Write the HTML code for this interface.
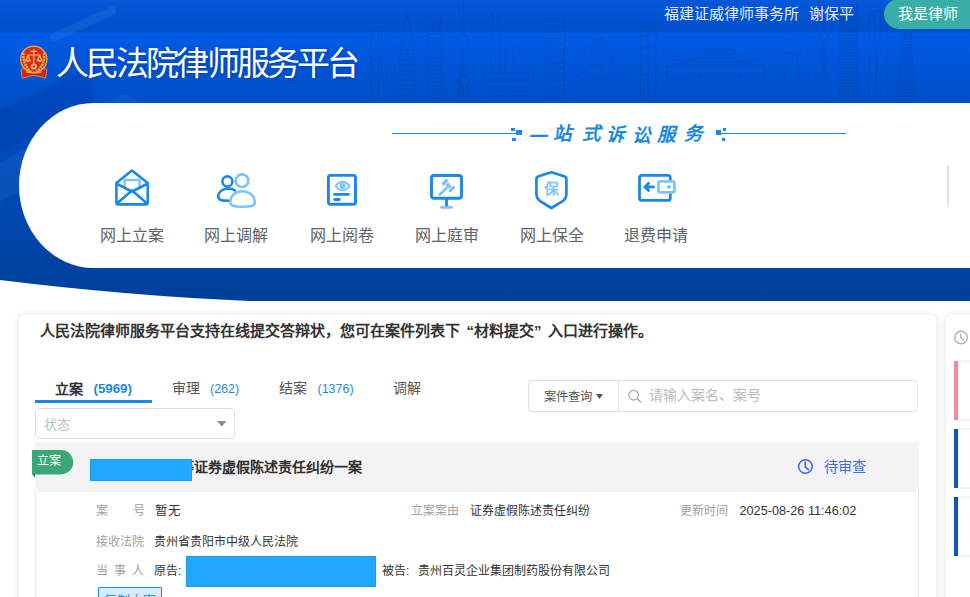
<!DOCTYPE html>
<html lang="zh-CN"><head><meta charset="utf-8">
<style>
*{margin:0;padding:0;box-sizing:border-box}
html,body{width:970px;height:597px;overflow:hidden;background:#fff}
body{position:relative;font-family:"Liberation Sans",sans-serif;color:#333}
.a{position:absolute;white-space:nowrap;line-height:1}
svg.ov{position:absolute;left:0;top:0}
#panel{position:absolute;left:19px;top:103px;width:980px;height:165px;background:#fff;border-radius:75px 0 0 75px / 83px 0 0 83px}
.nt{position:absolute;width:70px;text-align:center;top:227.5px;font-size:16px;color:#606266;line-height:1}
.card{position:absolute;background:#fff;border-radius:5px;box-shadow:0 0 7px rgba(0,0,0,0.13)}
.lbl{color:#a0a0a0}
.sl{font-size:18.5px;font-weight:bold;font-style:italic;color:#1a88e6;}
.q{display:inline-block;width:14px;text-align:right}
.q2{display:inline-block;width:14px;text-align:left}
</style></head><body>
<svg class="ov" width="970" height="310" viewBox="0 0 970 310">
<defs>
<linearGradient id="g1" x1="0" y1="0" x2="0" y2="301" gradientUnits="userSpaceOnUse">
<stop offset="0" stop-color="#005de8"/>
<stop offset="0.11" stop-color="#005be6"/>
<stop offset="0.33" stop-color="#004fc8"/>
<stop offset="0.65" stop-color="#0049b4"/>
<stop offset="1" stop-color="#00409a"/>
</linearGradient>
<linearGradient id="gb" x1="0" y1="0" x2="0" y2="33" gradientUnits="userSpaceOnUse">
<stop offset="0" stop-color="#0457d8"/>
<stop offset="1" stop-color="#004fcb"/>
</linearGradient>
</defs>
<path d="M0,0H970V301H250Q130,296 0,280Z" fill="url(#g1)"/>
<rect x="0" y="0" width="970" height="32.5" fill="url(#gb)"/>
<g fill="none" stroke="#002070" stroke-opacity="0.22" stroke-width="0.8"><path d="M371,103 V31 H386 V103 M371,40 H386 M371,60 H386 M371,85 H386 M378.5,31 V103"/><path d="M399,103 L400,45 L403,30 L405,22 L407,15 V8.6 M407,15 L409,22 L411,30 L414,45 L415,103"/><path d="M403,35 H411"/><path d="M403,40 H411"/><path d="M403,45 H411"/><path d="M400,50 H414"/><path d="M400,55 H414"/><path d="M400,60 H414"/><path d="M400,65 H414"/><path d="M400,70 H414"/><path d="M400,75 H414"/><path d="M400,80 H414"/><path d="M400,85 H414"/><path d="M400,90 H414"/><path d="M400,95 H414"/><path d="M400,100 H414"/><path d="M427.5,103 V16 L441,20 V103 Z M433,22 H439 V30 Q436,26 433,30 Z"/><path d="M428,30 H440.5"/><path d="M428,34 H440.5"/><path d="M428,38 H440.5"/><path d="M428,42 H440.5"/><path d="M428,46 H440.5"/><path d="M428,50 H440.5"/><path d="M428,54 H440.5"/><path d="M428,58 H440.5"/><path d="M428,62 H440.5"/><path d="M428,66 H440.5"/><path d="M428,70 H440.5"/><path d="M428,74 H440.5"/><path d="M428,78 H440.5"/><path d="M428,82 H440.5"/><path d="M428,86 H440.5"/><path d="M428,90 H440.5"/><path d="M428,94 H440.5"/><path d="M428,98 H440.5"/><path d="M428,102 H440.5"/><path d="M463.3,0 V35 M463.3,47 V76 M463.3,88 V103 M460,103 L461,60 M466.5,103 L465.5,60 M455,103 L460,86 M471.5,103 L466.5,86"/><circle cx="463.3" cy="41.5" r="6"/><circle cx="463.3" cy="82" r="6"/><circle cx="463.3" cy="26" r="2"/><path d="M491,72 V30 L493,14 V30 L495,33 L497,28 L498,15 L500,28 V72 M505,72 V48 L510,44 L513,48 V72"/><path d="M482.6,73 H535 L528,90 H490 Z M486,80 H531"/><path d="M545.5,103 V21 H564.5 V103"/><path d="M545.5,26 H564.5"/><path d="M545.5,32 H564.5"/><path d="M545.5,38 H564.5"/><path d="M545.5,44 H564.5"/><path d="M545.5,50 H564.5"/><path d="M545.5,56 H564.5"/><path d="M545.5,62 H564.5"/><path d="M545.5,68 H564.5"/><path d="M545.5,74 H564.5"/><path d="M545.5,80 H564.5"/><path d="M545.5,86 H564.5"/><path d="M545.5,92 H564.5"/><path d="M545.5,98 H564.5"/><path d="M575.6,77.7 H629.2 L612,66 H591 Z M601.5,77.7 V66 M590,66 V58 H613 V66 M586,58 L601.5,50 L617,58 M589,50 L601.5,44 L614,50 M592,50 V45 M611,50 V45 M594,44 L601.5,39 L609,44 M601.5,39 V36"/><path d="M640.5,103 V31 Q648,27 655.8,31 V103 M640.5,36 H655.8 M640.5,48 H655.8 M640.5,75 H655.8 M648,29 V103"/><path d="M667,77.7 H764.5 V66 H667 Z M683,66 V62 H748 V66 M690,62 L694,58 H737 L741,62 M697,58 V54 H734 V58 M694,54 L698,49 H733 L737,54 M700,77.7 V73 M710,77.7 V73 M720,77.7 V73 M730,77.7 V73 M740,77.7 V73 M668,60 H690 M741,60 H763"/><path d="M775,77.7 L784,40 L796,37 L806,44 L810,77.7 H798 L797,55 L786,52 L785,77.7 Z"/><path d="M823.8,17 V33 M823.8,41 V77 M822,77 L822.5,41 M825.6,77 L825.1,41"/><ellipse cx="823.8" cy="37" rx="4.5" ry="3"/><path d="M839.5,103 V5 H857.5 V103"/><path d="M840,8 H857"/><path d="M840,11 H857"/><path d="M840,14 H857"/><path d="M840,17 H857"/><path d="M840,20 H857"/><path d="M840,23 H857"/><path d="M840,26 H857"/><path d="M840,29 H857"/><path d="M840,32 H857"/><path d="M840,35 H857"/><path d="M840,38 H857"/><path d="M840,41 H857"/><path d="M840,44 H857"/><path d="M840,47 H857"/><path d="M840,50 H857"/><path d="M840,53 H857"/><path d="M840,56 H857"/><path d="M840,59 H857"/><path d="M840,62 H857"/><path d="M840,65 H857"/><path d="M840,68 H857"/><path d="M840,71 H857"/><path d="M840,74 H857"/><path d="M840,77 H857"/><path d="M840,80 H857"/><path d="M840,83 H857"/><path d="M840,86 H857"/><path d="M840,89 H857"/><path d="M840,92 H857"/><path d="M840,95 H857"/><path d="M840,98 H857"/><path d="M840,101 H857"/><path d="M869,103 V13 Q878,9 887,13 V103 M873,103 L882,13 M878,103 L874,13"/><path d="M898,103 L902,30 L910,25 L915.4,103"/><path d="M901.5,33 H911.5"/><path d="M901.4,36 H911.6"/><path d="M901.2,39 H911.8"/><path d="M901.0,42 H912.0"/><path d="M900.9,45 H912.1"/><path d="M900.8,48 H912.2"/><path d="M900.6,51 H912.4"/><path d="M900.5,54 H912.5"/><path d="M900.3,57 H912.7"/><path d="M900.1,60 H912.9"/><path d="M900.0,63 H913.0"/><path d="M899.9,66 H913.1"/><path d="M899.7,69 H913.3"/><path d="M899.5,72 H913.5"/><path d="M899.4,75 H913.6"/><path d="M899.2,78 H913.8"/><path d="M899.1,81 H913.9"/><path d="M899.0,84 H914.0"/><path d="M898.8,87 H914.2"/><path d="M898.6,90 H914.4"/><path d="M898.5,93 H914.5"/><path d="M898.4,96 H914.6"/><path d="M898.2,99 H914.8"/><path d="M898.0,102 H915.0"/></g>
<line x1="-40" y1="150" x2="75" y2="95" stroke="#001a70" stroke-opacity="0.13" stroke-width="38" stroke-linecap="round"/>
<line x1="-40" y1="205" x2="125" y2="112" stroke="#ffffff" stroke-opacity="0.045" stroke-width="34" stroke-linecap="round"/>
<line x1="55" y1="37" x2="112" y2="11" stroke="#fff" stroke-opacity="0.06" stroke-width="9" stroke-linecap="round"/>
</svg>
<div id="panel"></div>

<!-- header texts -->
<div class="a" id="title" style="left:55.5px;top:47px;font-size:33px;letter-spacing:-2.8px;color:#fff;text-shadow:0 1px 4px rgba(0,25,100,0.35)">人民法院律师服务平台</div>
<div class="a" id="org" style="left:664px;top:6px;font-size:15px;color:#e3ebff">福建证威律师事务所</div>
<div class="a" id="uname" style="left:809px;top:6px;font-size:15px;color:#e3ebff">谢保平</div>
<div style="position:absolute;left:884px;top:-1px;width:110px;height:30px;border-radius:15px;background:#39aea6"></div>
<div class="a" id="btnt" style="left:898px;top:6px;font-size:15px;color:#fff">我是律师</div>

<!-- emblem -->
<svg class="ov" width="970" height="100" viewBox="0 0 970 100">
<path d="M21,69.5 L25.5,67.5 L42,67.5 L46.8,69.5 L45.5,78.3 L39,76.2 Q34,74.8 29,76.2 L22.2,78.3 Z" fill="#d01f1a" stroke="#e2a23a" stroke-width="0.8"/>
<circle cx="33.8" cy="59.2" r="13.1" fill="#dc2a1f" stroke="#e9b04a" stroke-width="1.3"/>
<path d="M23.5,53 Q22.5,65 31,71.5 M44.1,53 Q45.1,65 36.6,71.5" stroke="#eab54c" stroke-width="2.4" fill="none" stroke-dasharray="2 0.8"/>
<path d="M33.8,49.5 V64 M30.5,51.3 H37.1 M27.8,55 H39.8 M28,55 L26,60.5 M28,55 L30,60.5 M39.6,55 L37.6,60.5 M39.6,55 L41.6,60.5" stroke="#f2c558" stroke-width="1.2" fill="none"/>
<path d="M25.2,60.3 Q28,63 30.8,60.3 Z M36.8,60.3 Q39.6,63 42.4,60.3 Z" fill="#f2c558" stroke="#f2c558" stroke-width="0.8"/>
<circle cx="33.8" cy="66.5" r="3" fill="#f2c558"/>
<circle cx="33.8" cy="66.5" r="1.2" fill="#d02a1f"/>
<path d="M26,71.8 Q33.8,74 41.6,71.8" stroke="#eab54c" stroke-width="1.4" fill="none"/>
</svg>
<!-- service title decoration -->
<svg class="ov" width="970" height="300" viewBox="0 0 970 300">
<g fill="#1a88e6">
<rect x="392" y="133" width="124" height="1"/>
<rect x="516" y="130" width="6" height="5"/>
<rect x="511" y="128" width="4" height="3"/>
<rect x="512" y="138" width="4" height="3"/>
<rect x="721" y="133" width="125" height="1"/>
<rect x="716" y="130" width="5" height="5"/>
<rect x="723" y="128" width="3" height="3"/>
<rect x="722" y="138" width="3" height="3"/>
<rect x="947" y="165" width="2" height="42" fill="#e2e2f0"/>
</g>
</svg>
<div class="a sl" id="sl0" style="left:528px;top:128px">一</div><div class="a sl" id="sl1" style="left:553px;top:125px">站</div><div class="a sl" id="sl2" style="left:582px;top:125px">式</div><div class="a sl" id="sl3" style="left:606px;top:126px">诉</div><div class="a sl" id="sl4" style="left:632px;top:127px">讼</div><div class="a sl" id="sl5" style="left:657px;top:126px">服</div><div class="a sl" id="sl6" style="left:684px;top:125px">务</div>

<!-- nav icons -->
<svg class="ov" width="970" height="300" viewBox="0 0 970 300" fill="none" stroke-linecap="round" stroke-linejoin="round">
<!-- envelope -->
<path d="M124.7,187 V180 H139.6 V187" stroke="#7cc4f8" stroke-width="2.5"/>
<path d="M116.4,183 L131.9,170.5 L147.7,183 V202.5 Q147.7,204.4 145.8,204.4 H118.3 Q116.4,204.4 116.4,202.5 Z" stroke="#1a88e6" stroke-width="2.6"/>
<path d="M117,184 L132,191.5 L147,184 M117.5,203 L132,190.5 L146.5,203" stroke="#1a88e6" stroke-width="2.6"/>
<!-- people -->
<circle cx="227.4" cy="181.4" r="5" stroke="#1a88e6" stroke-width="2.6"/>
<path d="M235,190.3 C231,187.8 222,187.8 219,193.3 C217,197.5 219,200.4 223,200.6 L229,200.8" stroke="#1a88e6" stroke-width="2.6"/>
<circle cx="242" cy="180.7" r="6.3" stroke="#7cc4f8" stroke-width="2.6"/>
<path d="M230.3,202.8 C230.3,195.5 235.5,191.3 242.5,191.3 C249.5,191.3 254.8,195.5 254.8,202.8 C254.8,206.3 250,206.8 242.5,206.8 C235,206.8 230.3,206.3 230.3,202.8 Z" stroke="#7cc4f8" stroke-width="2.6" fill="#fff"/>
<!-- doc eye -->
<rect x="328.4" y="175.4" width="27.1" height="28.9" rx="2" stroke="#1a88e6" stroke-width="2.9"/>
<path d="M335.6,186.1 Q342.6,177.6 349.6,186.1 Q342.6,194.6 335.6,186.1 Z" stroke="#7cc4f8" stroke-width="2" fill="#fff"/>
<circle cx="342.6" cy="186.1" r="3" fill="#7cc4f8"/>
<path d="M334.6,194.4 H348.4 M334.6,199.5 H339.3" stroke="#1a88e6" stroke-width="2.8"/>
<!-- monitor gavel -->
<rect x="431.5" y="175.5" width="30" height="22.7" rx="2.5" stroke="#1a88e6" stroke-width="2.9"/>
<path d="M446.5,199.6 V205.5" stroke="#1a88e6" stroke-width="2.8"/>
<path d="M441.6,207.3 H451.6" stroke="#7cc4f8" stroke-width="2.8"/>
<g transform="rotate(45 448.4 185.6)" fill="#7cc4f8" stroke="none">
<rect x="443.6" y="183.6" width="9.6" height="4"/>
<rect x="441.8" y="181.9" width="3.4" height="7.4" rx="1"/>
<rect x="451.6" y="181.9" width="3.4" height="7.4" rx="1"/>
<rect x="445.2" y="181.9" width="0.6" height="7.4" fill="#fff"/>
<rect x="451" y="181.9" width="0.6" height="7.4" fill="#fff"/>
</g>
<path d="M446.4,188.3 L439.8,194.6" stroke="#7cc4f8" stroke-width="2.7"/>
<!-- shield -->
<path d="M551.4,172.3 L538.6,176.3 Q536.4,177 536.4,179.4 V194 Q536.4,198.5 540.5,201.3 L551.4,208 L562.3,201.3 Q566.4,198.5 566.4,194 V179.4 Q566.4,177 564.2,176.3 Z" stroke="#1a88e6" stroke-width="2.7"/>
<!-- wallet -->
<rect x="639.5" y="175.3" width="30.8" height="25.1" rx="2.5" stroke="#1a88e6" stroke-width="2.8"/>
<rect x="658.4" y="181.4" width="16" height="10.9" rx="2" stroke="#7cc4f8" stroke-width="2.8" fill="#fff"/>
<circle cx="669" cy="186.9" r="1.9" fill="#7cc4f8" stroke="none"/>
<path d="M645.5,186.9 H653.5 M648.6,183.2 L644.9,186.9 L648.6,190.6" stroke="#1a88e6" stroke-width="2.8"/>
</svg>
<div class="a" id="bao" style="left:543.5px;top:181px;font-size:15px;color:#7cc4f8;-webkit-text-stroke:0.5px #7cc4f8">保</div>

<div class="nt" style="left:96.5px">网上立案</div>
<div class="nt" style="left:201px">网上调解</div>
<div class="nt" style="left:306.5px">网上阅卷</div>
<div class="nt" style="left:411.5px">网上庭审</div>
<div class="nt" style="left:517px">网上保全</div>
<div class="nt" style="left:621px">退费申请</div>

<!-- lower content -->
<div class="card" style="left:19px;top:315px;width:917px;height:300px"></div>
<div class="card" style="left:946px;top:315px;width:60px;height:300px"></div>


<div class="a" id="notice" style="left:40px;top:323px;font-size:15px;font-weight:bold;color:#333">人民法院律师服务平台支持在线提交答辩状，您可在案件列表下<span class="q">“</span>材料提交<span class="q2">”</span>入口进行操作。</div>

<!-- tabs -->
<div class="a" id="t1" style="left:55px;top:381.5px;font-size:14px;font-weight:bold;color:#303133">立案</div>
<div class="a" id="t1n" style="left:93.5px;top:382px;font-size:13.3px;font-weight:bold;color:#1a88e6">(5969)</div>
<div style="position:absolute;left:35px;top:400px;width:117px;height:3px;background:#1a88e6"></div>
<div class="a" id="t2" style="left:172px;top:381px;font-size:14px;color:#555">审理</div>
<div class="a" id="t2n" style="left:210px;top:383px;font-size:12.5px;color:#1a88e6">(262)</div>
<div class="a" id="t3" style="left:279px;top:381px;font-size:14px;color:#555">结案</div>
<div class="a" id="t3n" style="left:317.5px;top:383px;font-size:12.5px;color:#1a88e6">(1376)</div>
<div class="a" id="t4" style="left:393px;top:381px;font-size:14px;color:#555">调解</div>

<!-- select -->
<div style="position:absolute;left:35px;top:408px;width:200px;height:31px;border:1px solid #dcdfe6;border-radius:4px"></div>
<div class="a" style="left:44px;top:418px;font-size:13px;color:#bcbfc6">状态</div>
<svg class="ov" width="970" height="597" viewBox="0 0 970 597"><path d="M217,421 H226.5 L221.75,426.5 Z" fill="#8a8d93"/></svg>

<!-- search -->
<div style="position:absolute;left:528px;top:380px;width:390px;height:32px;border:1px solid #dcdfe6;border-radius:4px"></div>
<div style="position:absolute;left:618px;top:381px;width:1px;height:30px;background:#dcdfe6"></div>
<div class="a" id="sq" style="left:543.5px;top:390.5px;font-size:12.3px;color:#555">案件查询</div>
<svg class="ov" width="970" height="597" viewBox="0 0 970 597">
<path d="M596,394 H603 L599.5,399 Z" fill="#555"/>
<circle cx="633.6" cy="395.2" r="4.8" stroke="#a8abb2" stroke-width="1.3" fill="none"/>
<path d="M637.2,398.8 L640.6,402.2" stroke="#a8abb2" stroke-width="1.4" stroke-linecap="round"/>
</svg>
<div class="a" id="ph" style="left:649px;top:388px;font-size:14px;color:#b8bbc1">请输入案名、案号</div>

<!-- list item -->
<div style="position:absolute;left:35px;top:442px;width:884px;height:200px;border:1px solid #e8e8e8;border-top:none"></div>
<div style="position:absolute;left:35px;top:442px;width:884px;height:50px;background:#f3f3f3"></div>
<svg class="ov" width="970" height="597" viewBox="0 0 970 597">
<path d="M32,474 L35,474 L35,477.5 Z" fill="#24805a"/>
<path d="M32,450 H61 A12.2,12.2 0 0 1 61,474.4 H32 Z" fill="#3aa876"/>
</svg>
<div class="a" style="left:37px;top:455px;font-size:12px;color:#fff">立案</div>
<div class="a" style="left:180px;top:460px;font-size:14px;font-weight:bold;color:#303133">等</div>
<div style="position:absolute;left:90px;top:459px;width:102px;height:22px;background:#22a9ff;border:1px solid #1b9af2"></div>
<div class="a" id="ctitle" style="left:194px;top:460px;font-size:14px;font-weight:bold;color:#303133">证券虚假陈述责任纠纷一案</div>
<svg class="ov" width="970" height="597" viewBox="0 0 970 597">
<circle cx="805.4" cy="466.5" r="6.8" stroke="#3c6fe6" stroke-width="1.6" fill="none"/>
<path d="M805.2,462 V467 L808.6,469.6" stroke="#3c6fe6" stroke-width="1.6" fill="none" stroke-linecap="round"/>
</svg>
<div class="a" id="st" style="left:823.5px;top:459.5px;font-size:14.3px;color:#3c6fe6">待审查</div>

<div class="a lbl" style="left:96px;top:505px;font-size:12px">案<span style="display:inline-block;width:25px"></span>号</div>
<div class="a" style="left:154.5px;top:505px;font-size:12.5px;color:#333">暂无</div>
<div class="a lbl" style="left:411px;top:505px;font-size:12px">立案案由</div>
<div class="a" style="left:470px;top:505px;font-size:12px;color:#333">证券虚假陈述责任纠纷</div>
<div class="a lbl" style="left:680px;top:505px;font-size:12px">更新时间</div>
<div class="a" id="time" style="left:739.5px;top:505px;font-size:12.7px;color:#333">2025-08-26 11:46:02</div>
<div class="a lbl" style="left:96px;top:535.5px;font-size:12px">接收法院</div>
<div class="a" style="left:154px;top:535.5px;font-size:12px;color:#333">贵州省贵阳市中级人民法院</div>
<div class="a lbl" style="left:96px;top:565px;font-size:12px;letter-spacing:6px">当事人</div>
<div class="a" style="left:154px;top:565px;font-size:12px;color:#333">原告:</div>
<div style="position:absolute;left:186px;top:556px;width:190px;height:31px;background:#22a9ff;border:1px solid #1b9af2"></div>
<div class="a" style="left:382px;top:565px;font-size:12px;color:#333">被告<span style="display:inline-block;width:12px">:</span>贵州百灵企业集团制药股份有限公司</div>
<div style="position:absolute;left:98px;top:587px;width:64px;height:24px;background:#d6ebfc;border:1px solid #1a88e6;border-radius:1px"></div>
<div class="a" style="left:104px;top:593.5px;font-size:13px;color:#1a88e6">复制立案</div>

<!-- right panel -->
<svg class="ov" width="970" height="597" viewBox="0 0 970 597">
<circle cx="961" cy="337.6" r="6.3" stroke="#aeb0b5" stroke-width="1.4" fill="none"/>
<path d="M960.8,334 V338 L963.5,340" stroke="#aeb0b5" stroke-width="1.4" fill="none" stroke-linecap="round"/>
<rect x="958" y="361" width="30" height="59" fill="none" stroke="#e8e8e8"/>
<rect x="954" y="361" width="4" height="59" fill="#f28c9b"/>
<rect x="958" y="429" width="30" height="59" fill="none" stroke="#e8e8e8"/>
<rect x="954" y="429" width="4" height="59" fill="#0d55b9"/>
<rect x="958" y="497" width="30" height="59" fill="none" stroke="#e8e8e8"/>
<rect x="954" y="497" width="4" height="59" fill="#0d55b9"/>
</svg>
</body></html>
